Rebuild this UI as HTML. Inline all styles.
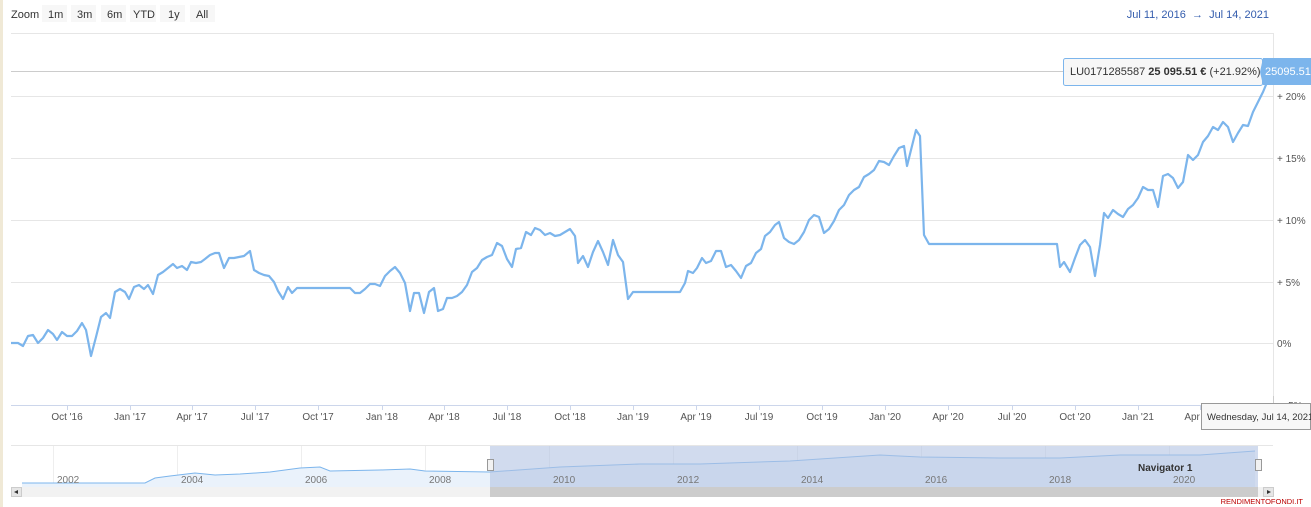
<!DOCTYPE html>
<html><head><meta charset="utf-8"><style>
body{margin:0;width:1311px;height:507px;overflow:hidden;background:#fff;font-family:"Liberation Sans",sans-serif;}
</style></head><body>
<svg width="1311" height="507" xmlns="http://www.w3.org/2000/svg" style="position:absolute;left:0;top:0;font-family:'Liberation Sans',sans-serif">
<rect x="0" y="0" width="3" height="507" fill="#f0e9d6"/>
<text x="11" y="18" font-size="11" fill="#333">Zoom</text>
<g font-size="11" fill="#333">
<rect x="42" y="5" width="25" height="17" fill="#f7f7f7"/><text x="48" y="18">1m</text>
<rect x="71" y="5" width="25" height="17" fill="#f7f7f7"/><text x="77" y="18">3m</text>
<rect x="101" y="5" width="25" height="17" fill="#f7f7f7"/><text x="107" y="18">6m</text>
<rect x="130" y="5" width="26" height="17" fill="#f7f7f7"/><text x="133" y="18">YTD</text>
<rect x="160" y="5" width="25" height="17" fill="#f7f7f7"/><text x="168" y="18">1y</text>
<rect x="190" y="5" width="25" height="17" fill="#f7f7f7"/><text x="196" y="18">All</text>
</g>
<text x="1269" y="18" font-size="11" fill="#335cad" text-anchor="end">Jul 11, 2016 &#160;→ &#160;Jul 14, 2021</text>
<g stroke="#e6e6e6" stroke-width="1">
<line x1="11" y1="33.5" x2="1273" y2="33.5"/>
<line x1="1273.5" y1="33" x2="1273.5" y2="405"/>
<line x1="11" y1="96.5" x2="1273" y2="96.5"/>
<line x1="11" y1="158.5" x2="1273" y2="158.5"/>
<line x1="11" y1="220.5" x2="1273" y2="220.5"/>
<line x1="11" y1="282.5" x2="1273" y2="282.5"/>
<line x1="11" y1="343.5" x2="1273" y2="343.5"/>
</g>
<line x1="11" y1="71.5" x2="1273" y2="71.5" stroke="#ccc"/>
<line x1="11" y1="405.5" x2="1273" y2="405.5" stroke="#ccd6eb"/>
<g stroke="#ccd6eb"><line x1="67.5" y1="405" x2="67.5" y2="410"/><line x1="130.5" y1="405" x2="130.5" y2="410"/><line x1="192.5" y1="405" x2="192.5" y2="410"/><line x1="255.5" y1="405" x2="255.5" y2="410"/><line x1="318.5" y1="405" x2="318.5" y2="410"/><line x1="382.5" y1="405" x2="382.5" y2="410"/><line x1="444.5" y1="405" x2="444.5" y2="410"/><line x1="507.5" y1="405" x2="507.5" y2="410"/><line x1="570.5" y1="405" x2="570.5" y2="410"/><line x1="633.5" y1="405" x2="633.5" y2="410"/><line x1="696.5" y1="405" x2="696.5" y2="410"/><line x1="759.5" y1="405" x2="759.5" y2="410"/><line x1="822.5" y1="405" x2="822.5" y2="410"/><line x1="885.5" y1="405" x2="885.5" y2="410"/><line x1="948.5" y1="405" x2="948.5" y2="410"/><line x1="1012.5" y1="405" x2="1012.5" y2="410"/><line x1="1075.5" y1="405" x2="1075.5" y2="410"/><line x1="1138.5" y1="405" x2="1138.5" y2="410"/><line x1="1200.5" y1="405" x2="1200.5" y2="410"/></g>
<g font-size="10" fill="#555" text-anchor="middle">
<text x="67" y="420">Oct '16</text><text x="130" y="420">Jan '17</text><text x="192" y="420">Apr '17</text><text x="255" y="420">Jul '17</text><text x="318" y="420">Oct '17</text><text x="382" y="420">Jan '18</text><text x="444" y="420">Apr '18</text><text x="507" y="420">Jul '18</text><text x="570" y="420">Oct '18</text><text x="633" y="420">Jan '19</text><text x="696" y="420">Apr '19</text><text x="759" y="420">Jul '19</text><text x="822" y="420">Oct '19</text><text x="885" y="420">Jan '20</text><text x="948" y="420">Apr '20</text><text x="1012" y="420">Jul '20</text><text x="1075" y="420">Oct '20</text><text x="1138" y="420">Jan '21</text><text x="1200" y="420">Apr '21</text>
</g>
<g font-size="10" fill="#555">
<text x="1277" y="100">+ 20%</text><text x="1277" y="162">+ 15%</text><text x="1277" y="224">+ 10%</text><text x="1277" y="286">+ 5%</text><text x="1277" y="347">0%</text><text x="1282" y="409">- 5%</text>
</g>
<polyline fill="none" stroke="#7cb5ec" stroke-width="2.2" stroke-linejoin="round" points="11,343 18,343 23,346 28,336 33,335 38,343 43,338 48,330 53,334 57,340 62,332 67,336 72,336 77,331 82,323 86,330 91,356 96,337 101,317 106,313 110,318 115,292 120,289 125,292 129,299 134,287 139,285 144,289 148,285 153,294 158,275 163,272 168,268 173,264 177,268 182,266 187,270 191,262 196,263 201,262 205,259 210,255 215,253 219,253 224,268 229,258 234,258 239,257 244,256 250,251 254,270 259,273 264,275 269,276 274,282 278,291 283,299 288,287 292,293 297,288 350,288 355,293 360,293 365,289 370,284 375,284 380,286 385,276 390,271 395,267 400,273 405,283 410,311 414,293 419,293 424,313 429,292 434,288 438,311 443,309 447,298 452,298 457,296 462,292 467,285 472,272 477,268 482,260 487,257 492,255 497,243 502,246 507,259 512,267 516,249 521,248 526,232 531,235 535,228 540,230 545,235 550,233 555,236 560,235 565,232 570,229 575,236 578,263 583,256 588,267 593,252 598,241 603,252 608,265 613,240 618,255 623,262 628,299 633,292 680,292 685,283 688,271 693,273 697,268 702,258 706,263 711,261 716,251 721,251 726,267 731,265 736,271 741,278 746,266 751,263 756,253 761,249 765,236 770,232 775,225 779,222 784,238 789,242 794,244 799,240 804,232 809,220 814,215 819,217 824,233 829,229 834,221 839,210 844,205 849,195 854,190 859,187 864,177 869,174 874,170 879,161 884,162 889,165 894,156 899,148 904,146 907,166 911,150 916,130 920,136 924,235 929,244 1057,244 1060,267 1064,262 1070,272 1075,258 1080,245 1085,240 1090,247 1095,276 1100,245 1104,213 1108,218 1113,210 1118,214 1123,217 1128,209 1133,205 1138,198 1143,187 1148,190 1153,190 1158,207 1163,176 1168,174 1173,178 1178,188 1183,182 1188,155 1193,160 1198,155 1203,142 1208,136 1213,127 1218,130 1223,122 1228,127 1233,142 1238,133 1243,125 1248,126 1253,112 1258,102 1263,92 1268,80 1273,72"/>
<rect x="1063.5" y="58.5" width="199" height="27" fill="#f7f7f7" fill-opacity="0.95" stroke="#7cb5ec" rx="2"/>
<text x="1070" y="75" font-size="11" fill="#333">LU0171285587 <tspan font-weight="bold">25 095.51 €</tspan> (+21.92%)</text>
<path d="M1263 58 H1311 V85 H1263 L1260 72 Z" fill="#7cb5ec"/>
<text x="1265" y="75" font-size="11" fill="#fff">25095.51</text>
<line x1="1273.5" y1="405" x2="1273.5" y2="396" stroke="#ccc"/>
<rect x="1201.5" y="403.5" width="109" height="26" fill="#f7f7f7" stroke="#999"/>
<text x="1207" y="420" font-size="9.5" fill="#333">Wednesday, Jul 14, 2021</text>
<line x1="11" y1="445.5" x2="1273" y2="445.5" stroke="#e6e6e6"/>
<g stroke="#eee"><line x1="53.5" y1="446" x2="53.5" y2="487"/><line x1="177.5" y1="446" x2="177.5" y2="487"/><line x1="301.5" y1="446" x2="301.5" y2="487"/><line x1="425.5" y1="446" x2="425.5" y2="487"/><line x1="549.5" y1="446" x2="549.5" y2="487"/><line x1="673.5" y1="446" x2="673.5" y2="487"/><line x1="797.5" y1="446" x2="797.5" y2="487"/><line x1="921.5" y1="446" x2="921.5" y2="487"/><line x1="1045.5" y1="446" x2="1045.5" y2="487"/><line x1="1169.5" y1="446" x2="1169.5" y2="487"/></g>
<path d="M22 483 L145 483 L155 478 L170 476 L195 473 L215 475 L240 474 L270 472 L300 468 L320 467 L330 471 L380 470 L410 469 L425 471 L490 472 L560 467 L640 464 L700 464 L790 461 L880 455 L920 457 L1000 458 L1060 458 L1120 455 L1200 455 L1255 451 L1255 487 L22 487 Z" fill="#eaf2fb" stroke="none"/>
<polyline fill="none" stroke="#7cb5ec" points="22,483 145,483 155,478 170,476 195,473 215,475 240,474 270,472 300,468 320,467 330,471 380,470 410,469 425,471 490,472 560,467 640,464 700,464 790,461 880,455 920,457 1000,458 1060,458 1120,455 1200,455 1255,451"/>
<rect x="490" y="446" width="768" height="41" fill="#b3c3e3" fill-opacity="0.6"/>
<g font-size="10" fill="#777"><text x="57" y="483">2002</text><text x="181" y="483">2004</text><text x="305" y="483">2006</text><text x="429" y="483">2008</text><text x="553" y="483">2010</text><text x="677" y="483">2012</text><text x="801" y="483">2014</text><text x="925" y="483">2016</text><text x="1049" y="483">2018</text><text x="1173" y="483">2020</text></g>
<text x="1138" y="471" font-size="10" font-weight="bold" fill="#333">Navigator 1</text>
<rect x="487.5" y="459.5" width="6" height="11" fill="#f2f2f2" stroke="#999"/>
<rect x="1255.5" y="459.5" width="6" height="11" fill="#f2f2f2" stroke="#999"/>
<rect x="11" y="487" width="1262" height="10" fill="#f2f2f2"/>
<rect x="490" y="487" width="768" height="10" fill="#cccccc"/>
<rect x="11.5" y="487.5" width="10" height="9" fill="#e6e6e6" stroke="#ccc"/>
<rect x="1263.5" y="487.5" width="10" height="9" fill="#e6e6e6" stroke="#ccc"/>
<path d="M18 490 L14 492 L18 494Z M1267 490 L1271 492 L1267 494Z" fill="#333"/>
<text x="1303" y="504" font-size="7.5" fill="#b00" text-anchor="end">RENDIMENTOFONDI.IT</text>
</svg>
</body></html>
